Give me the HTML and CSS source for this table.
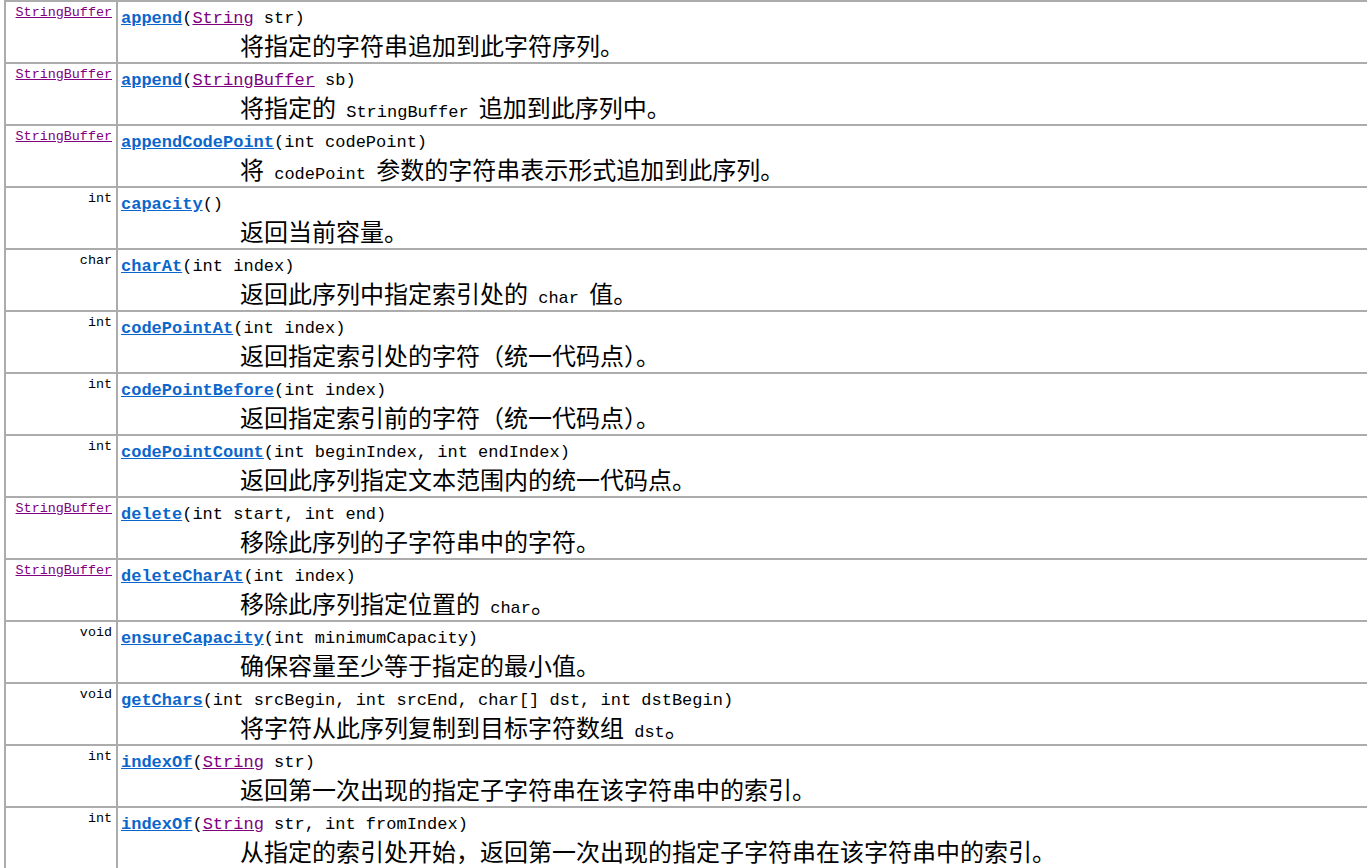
FILE: index.html
```html
<!DOCTYPE html>
<html lang="zh-CN">
<head>
    <meta charset="UTF-8">
    <title>StringBuffer 方法摘要</title>
    <link rel="stylesheet" href="styles.css">
</head>
<body>

<table class="summary">
    <tr>
        <td class="type"><a class="cls" href="#">StringBuffer</a></td>
        <td class="method">
            <div class="sig"><a class="name" href="#">append</a>(<a class="cls" href="#">String</a> str)</div>
            <div class="desc">将指定的字符串追加到此字符序列。</div>
        </td>
    </tr>
    <tr>
        <td class="type"><a class="cls" href="#">StringBuffer</a></td>
        <td class="method">
            <div class="sig"><a class="name" href="#">append</a>(<a class="cls" href="#">StringBuffer</a> sb)</div>
            <div class="desc">将指定的<code> StringBuffer </code>追加到此序列中。</div>
        </td>
    </tr>
    <tr>
        <td class="type"><a class="cls" href="#">StringBuffer</a></td>
        <td class="method">
            <div class="sig"><a class="name" href="#">appendCodePoint</a>(int codePoint)</div>
            <div class="desc">将<code> codePoint </code>参数的字符串表示形式追加到此序列。</div>
        </td>
    </tr>
    <tr>
        <td class="type">int</td>
        <td class="method">
            <div class="sig"><a class="name" href="#">capacity</a>()</div>
            <div class="desc">返回当前容量。</div>
        </td>
    </tr>
    <tr>
        <td class="type">char</td>
        <td class="method">
            <div class="sig"><a class="name" href="#">charAt</a>(int index)</div>
            <div class="desc">返回此序列中指定索引处的<code> char </code>值。</div>
        </td>
    </tr>
    <tr>
        <td class="type">int</td>
        <td class="method">
            <div class="sig"><a class="name" href="#">codePointAt</a>(int index)</div>
            <div class="desc">返回指定索引处的字符（统一代码点）。</div>
        </td>
    </tr>
    <tr>
        <td class="type">int</td>
        <td class="method">
            <div class="sig"><a class="name" href="#">codePointBefore</a>(int index)</div>
            <div class="desc">返回指定索引前的字符（统一代码点）。</div>
        </td>
    </tr>
    <tr>
        <td class="type">int</td>
        <td class="method">
            <div class="sig"><a class="name" href="#">codePointCount</a>(int beginIndex, int endIndex)</div>
            <div class="desc">返回此序列指定文本范围内的统一代码点。</div>
        </td>
    </tr>
    <tr>
        <td class="type"><a class="cls" href="#">StringBuffer</a></td>
        <td class="method">
            <div class="sig"><a class="name" href="#">delete</a>(int start, int end)</div>
            <div class="desc">移除此序列的子字符串中的字符。</div>
        </td>
    </tr>
    <tr>
        <td class="type"><a class="cls" href="#">StringBuffer</a></td>
        <td class="method">
            <div class="sig"><a class="name" href="#">deleteCharAt</a>(int index)</div>
            <div class="desc">移除此序列指定位置的<code> char</code>。</div>
        </td>
    </tr>
    <tr>
        <td class="type">void</td>
        <td class="method">
            <div class="sig"><a class="name" href="#">ensureCapacity</a>(int minimumCapacity)</div>
            <div class="desc">确保容量至少等于指定的最小值。</div>
        </td>
    </tr>
    <tr>
        <td class="type">void</td>
        <td class="method">
            <div class="sig"><a class="name" href="#">getChars</a>(int srcBegin, int srcEnd, char[] dst, int dstBegin)</div>
            <div class="desc">将字符从此序列复制到目标字符数组<code> dst</code>。</div>
        </td>
    </tr>
    <tr>
        <td class="type">int</td>
        <td class="method">
            <div class="sig"><a class="name" href="#">indexOf</a>(<a class="cls" href="#">String</a> str)</div>
            <div class="desc">返回第一次出现的指定子字符串在该字符串中的索引。</div>
        </td>
    </tr>
    <tr>
        <td class="type">int</td>
        <td class="method">
            <div class="sig"><a class="name" href="#">indexOf</a>(<a class="cls" href="#">String</a> str, int fromIndex)</div>
            <div class="desc">从指定的索引处开始，返回第一次出现的指定子字符串在该字符串中的索引。</div>
        </td>
    </tr>
</table>

</body>
</html>
```

FILE: styles.css
```css
body {
    margin: 0;
    padding: 0 0 0 4px;
    background-color: #fff;
    color: #000;
    overflow: hidden;
    font-family: "Liberation Mono", "Noto Sans CJK SC", monospace;
}

.summary {
    border-collapse: separate;
    border-spacing: 0;
    table-layout: fixed;
    width: 1420px;
}

.summary tr {
    height: 62px;
}

.summary td {
    border-top: 2px solid #acacac;
    border-left: 2px solid #acacac;
    vertical-align: top;
    box-sizing: border-box;
}

.type {
    width: 112px;
    text-align: right;
    padding: 3px 4px 0 0;
    font-size: 13.4px;
    line-height: 16px;
}

.method {
    padding: 6px 0 0 3px;
}

.sig {
    font-size: 17px;
    line-height: 22px;
    white-space: nowrap;
}

.desc {
    padding-left: 119px;
    font-family: "Noto Sans CJK SC", sans-serif;
    font-size: 24px;
    line-height: 30px;
    white-space: pre;
}

.desc code {
    font-family: "Liberation Mono", monospace;
    font-size: 17px;
    line-height: 1;
}

a.name {
    color: #0b66cc;
    font-weight: bold;
    text-decoration: underline;
}

a.cls {
    color: #800080;
    text-decoration: underline;
}
```
